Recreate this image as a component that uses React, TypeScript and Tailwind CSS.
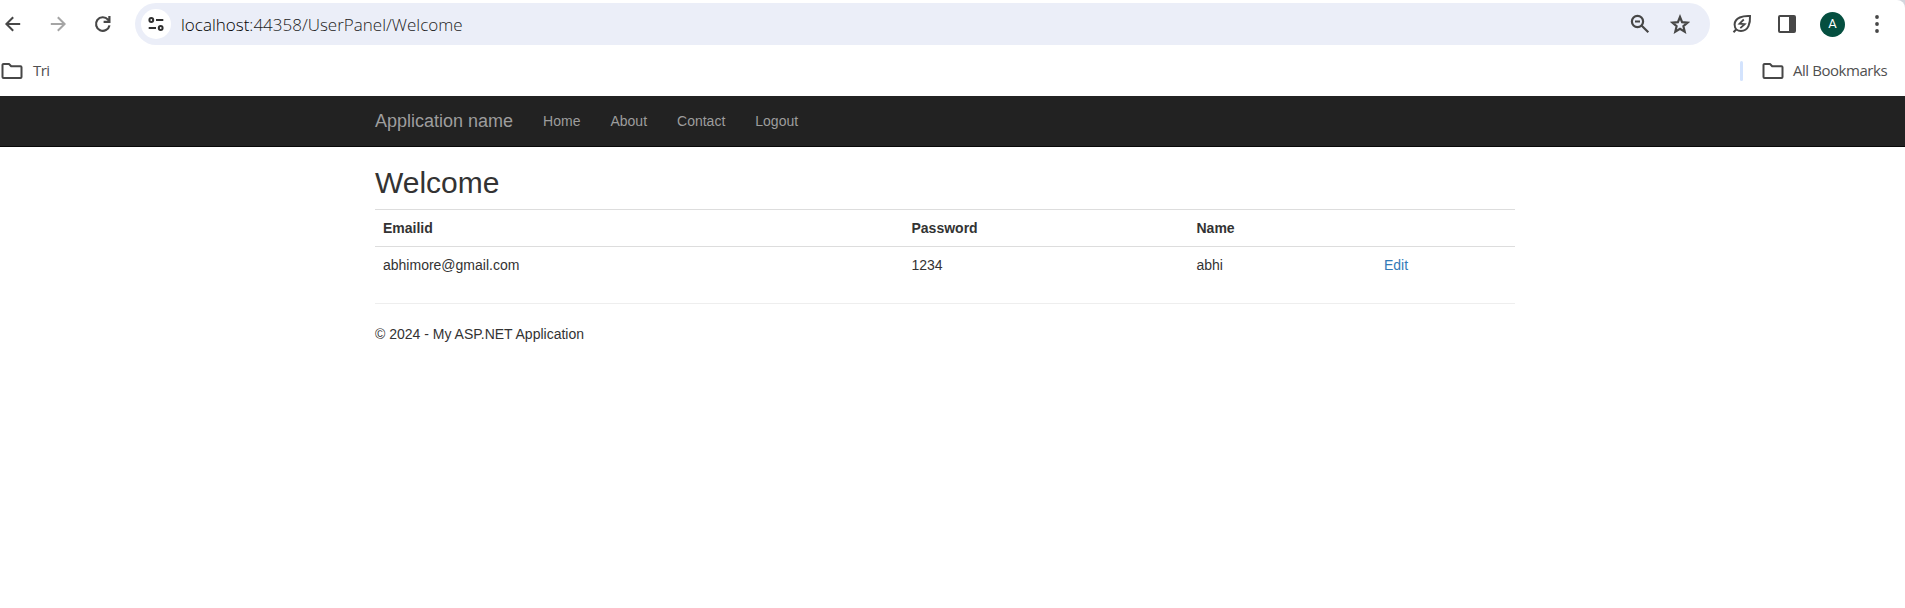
import React from 'react';

const ink = '#474747';

function Arrow({ color, flip = false }: { color: string; flip?: boolean }) {
  return (
    <svg width="18" height="18" viewBox="0 0 18 18" fill="none" stroke={color} strokeWidth="2" className={flip ? '-scale-x-100' : ''}>
      <path d="M16.2 9H3M9.2 2.2L2.4 9l6.8 6.8" />
    </svg>
  );
}

function Folder() {
  return (
    <svg width="22" height="18" viewBox="0 0 22 18" fill="none" stroke={ink} strokeWidth="2" strokeLinejoin="round" className="shrink-0">
      <path d="M1.5 3a1 1 0 0 1 1-1H8l2.2 2.3h9.3a1 1 0 0 1 1 1V15a1 1 0 0 1-1 1h-17a1 1 0 0 1-1-1z" />
    </svg>
  );
}

function Toolbar() {
  return (
    <div className="bg-[#d3d6dd]">
      <div className="flex h-12 items-center rounded-tr-lg bg-white pl-[4px]">
        <Arrow color={ink} />
        <div className="ml-[27px] flex">
          <Arrow color="#a5a5a5" flip />
        </div>
        <svg width="18" height="18" viewBox="0 0 18 18" fill="none" stroke={ink} strokeWidth="2.2" className="ml-[27px]">
          <path d="M15.5 10.4A6.8 6.8 0 1 1 14 4.6L15.4 6M15.4 1v5.8H9.6" />
        </svg>
        <div className="ml-[23px] flex h-[42px] w-[1575px] shrink-0 items-center rounded-full bg-[#ebeef8] pr-[20px] pl-[6px]">
          <div className="flex size-[30px] items-center justify-center rounded-full bg-white">
            <svg width="16" height="16" viewBox="0 0 16 16" fill="none" stroke="#303030" strokeWidth="2">
              <circle cx="3.3" cy="4" r="1.9" />
              <path d="M8 4h7.3M.7 12H8" />
              <circle cx="12.7" cy="12" r="1.9" />
            </svg>
          </div>
          <span className="ml-[10px] pt-px font-['Open_Sans',sans-serif] text-[17px] font-light text-[#222222]">
            <span className="text-black">localhost</span>:44358/UserPanel/Welcome
          </span>
          <svg width="20" height="20" viewBox="0 0 20 20" fill="none" stroke={ink} strokeWidth="2.2" className="ml-auto">
            <circle cx="7.5" cy="7.5" r="5.6" />
            <path d="M5 7.5h5M11.5 11.5L18.3 18.3" />
          </svg>
          <svg width="20" height="20" viewBox="0 0 20 20" fill="none" stroke={ink} strokeWidth="2.2" className="ml-[20px]">
            <path d="M10 3l2.1 5.1 5.5.5-4.2 3.6 1.3 5.4-4.7-2.9-4.7 2.9 1.3-5.4-4.2-3.6 5.5-.5z" />
          </svg>
        </div>
        <svg width="20" height="20" viewBox="0 0 20 20" fill="none" stroke={ink} strokeWidth="2" className="ml-[22px]">
          <path d="M18 2C11 1.600 2.800 3.500 2.600 10.500C2.600 14.500 5.500 17 9 17C16.500 17 18.400 9 18 2ZM4.600 15L1.500 18.300" />
          <path d="M11.800 5.500L7.500 9.700L12.700 10.200L8.300 14.200" strokeWidth="1.800" />
        </svg>
        <svg width="18" height="18" viewBox="0 0 18 18" fill="none" className="ml-[26px]">
          <rect x="1" y="1" width="16" height="16" rx="1" stroke={ink} strokeWidth="2" />
          <path d="M11 1h6v16h-6z" fill={ink} />
        </svg>
        <div className="ml-[24px] flex size-[25px] items-center justify-center rounded-full bg-[#054f40] font-[Roboto,sans-serif] text-[13px] text-white">A</div>
        <svg width="4" height="20" viewBox="0 0 4 20" fill={ink} className="ml-[30px]">
          <circle cx="2" cy="3" r="1.9" />
          <circle cx="2" cy="10" r="1.9" />
          <circle cx="2" cy="17" r="1.9" />
        </svg>
      </div>
    </div>
  );
}

function Bookmarks() {
  return (
    <div className="flex h-12 items-center bg-white pr-[18px] pb-[3px] pl-[1px] font-['Open_Sans',sans-serif] text-[15px] text-[#505050]">
      <Folder />
      <span className="ml-[10px] tracking-[-0.6px]">Tri</span>
      <div className="ml-auto h-[20px] w-[3px] rounded-full bg-[#d3e3fd]" />
      <div className="ml-[19px] flex">
        <Folder />
      </div>
      <span className="ml-[9px] w-[94px] tracking-[-0.45px] whitespace-nowrap">All Bookmarks</span>
    </div>
  );
}

function Navbar() {
  return (
    <nav className="h-[51px] border-b border-[#080808] bg-[#222222] text-[#9d9d9d]">
      <div className="ml-[375px] flex w-[1140px] items-center leading-[50px]">
        <a className="pr-[15px] text-[18px]" href="#">Application name</a>
        {['Home', 'About', 'Contact', 'Logout'].map((label) => (
          <a key={label} className="px-[15px] text-[14px]" href="#">{label}</a>
        ))}
      </div>
    </nav>
  );
}

export default function App() {
  return (
    <div className="min-h-[608px] bg-white">
      <Toolbar />
      <Bookmarks />
      <div className="font-['Liberation_Sans',Arial,sans-serif] text-[14px] leading-[20px] text-[#333333]">
        <Navbar />
        <main className="ml-[375px] w-[1140px] pt-[19px]">
          <h2 className="mb-[10px] text-[30px] leading-[33px]">Welcome</h2>
          <table className="mb-[20px] w-full table-fixed border-separate border-spacing-0 text-left">
            <colgroup>
              <col className="w-[528.5px]" />
              <col className="w-[285px]" />
              <col className="w-[187.5px]" />
              <col />
            </colgroup>
            <tbody>
              <tr>
                {['Emailid', 'Password', 'Name', ''].map((label, i) => (
                  <th key={i} className="h-[37px] border-t border-[#dddddd] px-[8px] font-bold">{label}</th>
                ))}
              </tr>
              <tr>
                {['abhimore@gmail.com', '1234', 'abhi'].map((value) => (
                  <td key={value} className="h-[37px] border-t border-[#dddddd] px-[8px]">{value}</td>
                ))}
                <td className="border-t border-[#dddddd] px-[8px]">
                  <a className="text-[#337ab7]" href="#">Edit</a>
                </td>
              </tr>
            </tbody>
          </table>
          <hr className="mb-[20px] border-[#eeeeee]" />
          <footer>© 2024 - My ASP.NET Application</footer>
        </main>
      </div>
    </div>
  );
}
